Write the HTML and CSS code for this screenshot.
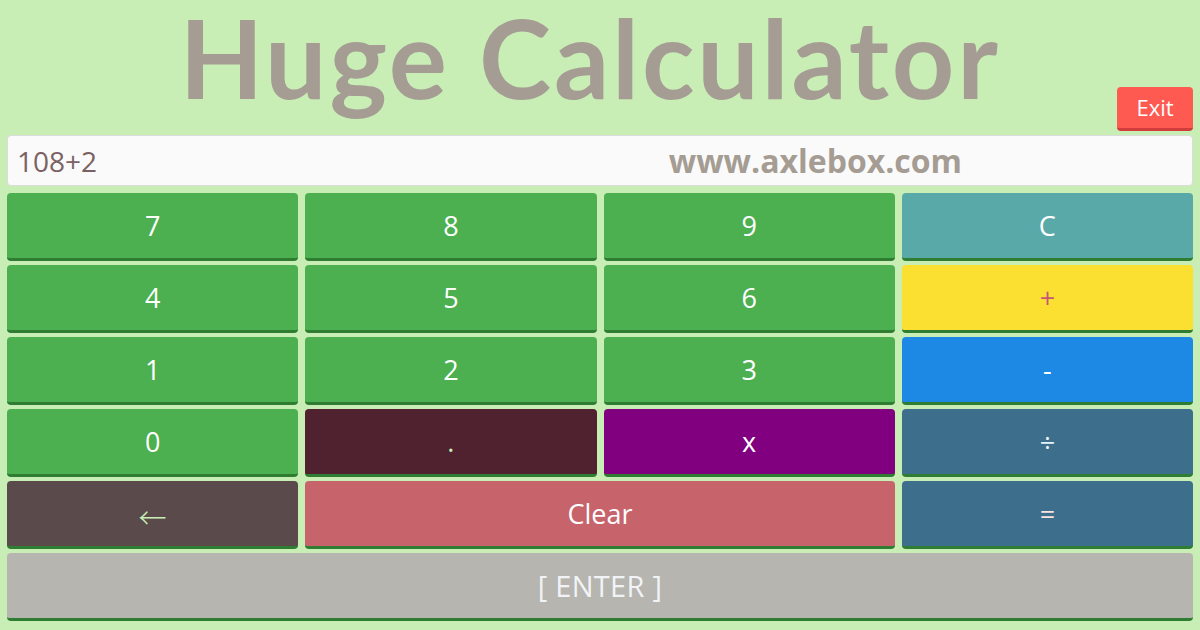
FILE: index.html
```html
<!DOCTYPE html>
<html>
<head>
<meta charset="utf-8">
<title>Huge Calculator</title>
<link rel="stylesheet" href="styles.css">
</head>
<body>
<div class="app">
  <header class="header">
    <h1 class="title">Huge Calculator</h1>
    <button class="exit">Exit</button>
  </header>
  <div class="display">
    <span class="expr">108+2</span>
    <span class="brand">www.axlebox.com</span>
  </div>
  <div class="keys">
    <button class="key green">7</button>
    <button class="key green">8</button>
    <button class="key green">9</button>
    <button class="key teal">C</button>
    <button class="key green">4</button>
    <button class="key green">5</button>
    <button class="key green">6</button>
    <button class="key yellow">+</button>
    <button class="key green">1</button>
    <button class="key green">2</button>
    <button class="key green">3</button>
    <button class="key blue">-</button>
    <button class="key green">0</button>
    <button class="key maroon">.</button>
    <button class="key purple">x</button>
    <button class="key steel">÷</button>
    <button class="key back"><span class="arrow">←</span></button>
    <button class="key clear span2">Clear</button>
    <button class="key steel eq">=</button>
    <button class="key enter span4">[ ENTER ]</button>
  </div>
</div>
</body>
</html>
```
FILE: styles.css
```css
html, body {
  margin: 0;
  padding: 0;
  background: #c8eeb6;
}
.app {
  width: 1200px;
  height: 630px;
  box-sizing: border-box;
  padding: 0 7px 0 7px;
  font-family: "Open Sans", "DejaVu Sans", sans-serif;
}
.header {
  display: grid;
  height: 135px;
}
.title {
  grid-area: 1 / 1;
  align-self: start;
  margin: 0;
  text-align: center;
  font-family: Lato, "Open Sans", sans-serif;
  font-weight: 700;
  font-size: 109px;
  line-height: 114px;
  color: #a59d94;
  padding-right: 20px;
  letter-spacing: 2.8px;
  white-space: nowrap;
}
.exit {
  grid-area: 1 / 1;
  justify-self: end;
  align-self: start;
  margin-top: 87px;
  width: 76px;
  height: 44px;
  border: none;
  border-bottom: 3px solid #d03d3a;
  border-radius: 4px;
  background: #ff5a52;
  color: #ffffff;
  font-family: "Open Sans", sans-serif;
  font-size: 22px;
  padding: 0 0 2px 0;
  cursor: pointer;
}
.display {
  height: 51px;
  box-sizing: border-box;
  border: 1px solid #dcdcdc;
  border-radius: 4px;
  background: #fafafa;
  display: flex;
  align-items: center;
  padding: 0 9px;
}
.expr {
  font-size: 28px;
  color: #7b6262;
  flex: 1;
}
.brand {
  font-weight: 700;
  font-size: 32px;
  color: #a59d94;
  margin-right: 221px;
}
.keys {
  margin-top: 7px;
  display: grid;
  grid-template-columns: repeat(4, 1fr);
  grid-auto-rows: 68px;
  column-gap: 7px;
  row-gap: 4px;
}
.key {
  border: none;
  border-bottom: 3px solid #2e7d32;
  border-radius: 4px;
  color: #ffffff;
  font-family: "Open Sans", sans-serif;
  font-size: 27px;
  padding: 0;
  margin: 0;
  cursor: pointer;
}
.span2 { grid-column: span 2; }
.span4 { grid-column: span 4; }
.green { background: #4caf50; }
.teal { background: #5aa9a9; }
.yellow { background: #fbe032; color: #c7557a; }
.blue { background: #1e88e5; }
.maroon { background: #50212e; color: #c8eeb6; }
.purple { background: #800080; }
.steel { background: #3d6e8c; color: #e8f4fb; }
.eq { color: #fbe3e0; }
.back { background: #5b4a4b; color: #c8eeb6; }
.arrow {
  font-family: "Noto Sans CJK JP", "DejaVu Sans", sans-serif;
  font-weight: 300;
  font-size: 28px;
  position: relative;
  top: 3px;
}
.clear { background: #c7636b; }
.enter {
  background: #b6b5b0;
  color: #f1f3f6;
  font-size: 29px;
  word-spacing: 0px;
  letter-spacing: 0.3px;
}
```
